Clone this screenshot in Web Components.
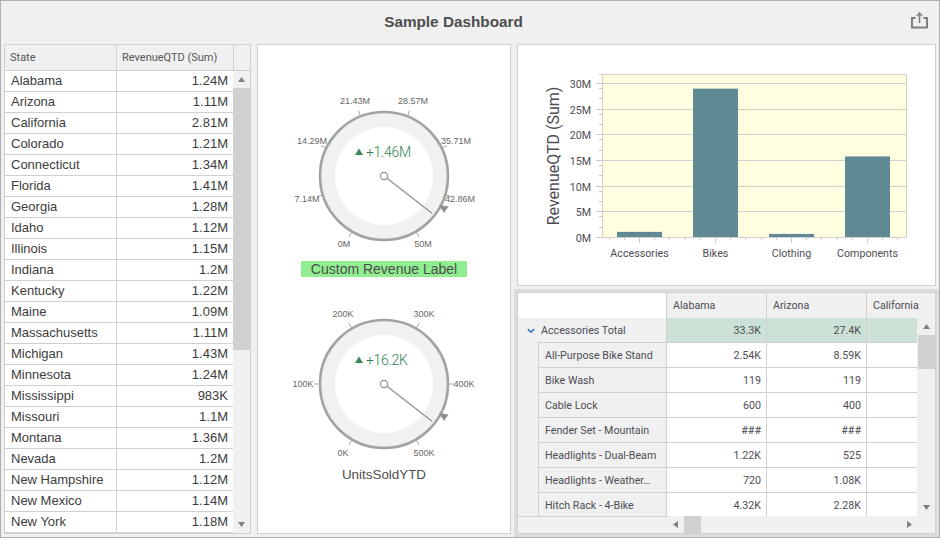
<!DOCTYPE html>
<html>
<head>
<meta charset="utf-8">
<title>Sample Dashboard</title>
<style>
  html, body { margin: 0; height: 100%; }
  body { font-family: "Liberation Sans", Arial, sans-serif; }
</style>
</head>
<body>
<sample-dashboard></sample-dashboard>

<script>
class DashHeader extends HTMLElement {
  constructor() {
    super();
    this.attachShadow({ mode: "open" });
    this.shadowRoot.innerHTML = `
      <style>
        :host {
          display: flex;
          align-items: center;
          height: 41px;
          padding: 0 11px 2px 0;
          flex: none;
        }
        h1 {
          flex: 1;
          margin: 0;
          padding-right: 5px;
          text-align: center;
          font: bold 15.3px "Liberation Sans", Arial, sans-serif;
          color: #4d4d4d;
        }
        svg { flex: none; display: block; margin-bottom: 2px; }
      </style>
      <h1><slot></slot></h1>
      <svg width="17" height="17" viewBox="0 0 17 17" fill="none" stroke="#7f7f7f" stroke-width="2">
        <path d="M4.5 6H1V15.5H16V6H12.5"/>
        <path d="M8.5 11V2" stroke-width="1.6"/>
        <path d="M5.8 4L8.5 1L11.2 4" stroke-width="1.4"/>
      </svg>
    `;
  }
}
customElements.define("dash-header", DashHeader);

class StateGrid extends HTMLElement {
  constructor() {
    super();
    this.attachShadow({ mode: "open" });
    const rows = [
      ["Alabama","1.24M"],["Arizona","1.11M"],["California","2.81M"],["Colorado","1.21M"],
      ["Connecticut","1.34M"],["Florida","1.41M"],["Georgia","1.28M"],["Idaho","1.12M"],
      ["Illinois","1.15M"],["Indiana","1.2M"],["Kentucky","1.22M"],["Maine","1.09M"],
      ["Massachusetts","1.11M"],["Michigan","1.43M"],["Minnesota","1.24M"],["Mississippi","983K"],
      ["Missouri","1.1M"],["Montana","1.36M"],["Nevada","1.2M"],["New Hampshire","1.12M"],
      ["New Mexico","1.14M"],["New York","1.18M"]
    ];
    this.shadowRoot.innerHTML = `
      <style>
        :host {
          display: flex;
          flex-direction: column;
          box-sizing: border-box;
          border: 1px solid #d0d0d0;
          background: #fff;
          overflow: hidden;
          font-family: "Liberation Sans", Arial, sans-serif;
        }
        .head {
          display: grid;
          grid-template-columns: 112px 117px 1fr;
          height: 25px;
          flex: none;
          background: #f0f0f0;
          border-bottom: 1px solid #d0d0d0;
          font: 11px Roboto, sans-serif;
          color: #555;
        }
        .head div {
          display: flex;
          align-items: center;
          padding: 0 0 1px 5px;
          border-right: 1px solid #d0d0d0;
        }
        .head div:last-child { border-right: 0; }
        .body { display: flex; flex: 1; min-height: 0; }
        .rows { width: 228px; flex: none; overflow: hidden; }
        .row {
          display: grid;
          grid-template-columns: 112px 116px;
          height: 21px;
          box-sizing: border-box;
          border-bottom: 1px solid #d0d0d0;
          font-size: 13px;
          line-height: 20px;
          color: #3c3c3c;
        }
        .row span { padding: 0 5px 0 6px; }
        .row span:first-child { border-right: 1px solid #d0d0d0; }
        .row span:last-child { text-align: right; }
        .scroll {
          flex: 1;
          display: flex;
          flex-direction: column;
          background: #f0f0f0;
        }
        .up, .down { height: 17px; flex: none; display: flex; align-items: center; justify-content: center; }
        .thumb { height: 262px; background: #d0d0d0; flex: none; }
        .gap { flex: 1; }
      </style>
      <div class="head"><div>State</div><div>RevenueQTD (Sum)</div><div></div></div>
      <div class="body">
        <div class="rows">
          ${rows.map(r => `<div class="row"><span>${r[0]}</span><span>${r[1]}</span></div>`).join("")}
        </div>
        <div class="scroll">
          <div class="up"><svg width="7" height="5"><path d="M3.5 0L7 5H0Z" fill="#808080"/></svg></div>
          <div class="thumb"></div>
          <div class="gap"></div>
          <div class="down"><svg width="7" height="5"><path d="M0 0H7L3.5 5Z" fill="#808080"/></svg></div>
        </div>
      </div>
    `;
  }
}
customElements.define("state-grid", StateGrid);

class DeltaGauge extends HTMLElement {
  constructor() {
    super();
    this.attachShadow({ mode: "open" });
  }
  connectedCallback() {
    const ticks = JSON.parse(this.getAttribute("ticks"));
    const cx = 96, cy = 96, r = 64;
    const tickMarks = ticks.map(t => {
      const a = t.a * Math.PI / 180;
      const x1 = cx + Math.sin(a) * r, y1 = cy - Math.cos(a) * r;
      const x2 = cx + Math.sin(a) * (r + 6), y2 = cy - Math.cos(a) * (r + 6);
      return `<line x1="${x1}" y1="${y1}" x2="${x2}" y2="${y2}" stroke="#a6a6a6"/>`;
    }).join("");
    const labels = ticks.map(t =>
      `<text x="${t.x}" y="${t.y}" text-anchor="middle">${t.t}</text>`).join("");
    this.shadowRoot.innerHTML = `
      <style>
        :host { display: block; width: 192px; flex: none; }
        svg { display: block; overflow: visible; }
        text { font: 9px "Liberation Sans", Arial, sans-serif; fill: #666; }
        .delta { font: 300 14px Roboto, sans-serif; letter-spacing: -0.3px; fill: #2f8455; }
      </style>
      <svg width="192" height="179" viewBox="0 0 192 179">
        ${tickMarks}
        <circle cx="${cx}" cy="${cy}" r="64" fill="#f1f1f1" stroke="#a3a3a3" stroke-width="2.6"/>
        <circle cx="${cx}" cy="${cy}" r="49" fill="#fff"/>
        <path d="M${cx - 29} ${cy - 21}l4 -6.5l4 6.5Z" fill="#3a8a5c"/>
        <text class="delta" x="${cx - 18}" y="${cy - 19}">${this.getAttribute("delta")}</text>
        <line x1="${cx + 3}" y1="${cy + 2.3}" x2="${cx + 48}" y2="${cy + 37.3}" stroke="#8f8f8f" stroke-width="1.2"/>
        <circle cx="${cx}" cy="${cy}" r="3.6" fill="#fff" stroke="#8f8f8f" stroke-width="1.2"/>
        <path d="M${cx + 55} ${cy + 29}L${cx + 64.5} ${cy + 30.5}L${cx + 60} ${cy + 37}Z" fill="#8f8f8f"/>
        ${labels}
      </svg>
    `;
  }
}
customElements.define("delta-gauge", DeltaGauge);

class GaugePanel extends HTMLElement {
  constructor() {
    super();
    this.attachShadow({ mode: "open" });
    this.shadowRoot.innerHTML = `
      <style>
        :host {
          display: flex;
          flex-direction: column;
          align-items: center;
          box-sizing: border-box;
          border: 1px solid #d0d0d0;
          background: #fff;
          padding-top: 35px;
        }
        .cap {
          font: 14px "Liberation Sans", Arial, sans-serif;
          color: #4d4d4d;
          text-align: center;
          line-height: 16px;
        }
        .custom {
          width: 166px;
          background: #90ee90;
          margin: 2px 0 11px;
        }
        .plain { font-size: 13.4px; }
      </style>
      <slot name="first"></slot>
      <div class="cap custom">Custom Revenue Label</div>
      <slot name="second"></slot>
      <div class="cap plain">UnitsSoldYTD</div>
    `;
  }
}
customElements.define("gauge-panel", GaugePanel);

class RevenueChart extends HTMLElement {
  constructor() {
    super();
    this.attachShadow({ mode: "open" });
    const plotW = 304, plotH = 163;
    const val = v => plotH - v * (154 / 30);
    const bars = [["Accessories", 1.0], ["Bikes", 28.9], ["Clothing", 0.6], ["Components", 15.7]];
    let gridLines = "", yLabels = "", axisTicks = "";
    for (let i = 0; i <= 6; i++) {
      const y = Math.round(val(i * 5)) + 0.5;
      if (i > 0) gridLines += `<line x1="0" x2="${plotW}" y1="${y}" y2="${y}" stroke="#cfcfcf"/>`;
      yLabels += `<text x="-11" y="${y + 4}" text-anchor="end">${i * 5}M</text>`;
      axisTicks += `<line x1="-6" x2="0" y1="${y}" y2="${y}" stroke="#c8c8c8"/>`;
      for (let j = 1; j <= 4 && i < 6; j++) {
        const m = Math.round(val(i * 5 + j)) + 0.5;
        if (j % 2 == 0) axisTicks += `<line x1="-3" x2="0" y1="${m}" y2="${m}" stroke="#c8c8c8"/>`;
      }
    }
    const top = Math.round(val(31.67)) + 0.5;
    axisTicks += `<line x1="-3" x2="0" y1="${top}" y2="${top}" stroke="#c8c8c8"/>`;
    bars.forEach((b, i) => {
      const c = 37.5 + i * 76;
      axisTicks += `<line x1="${c}" x2="${c}" y1="${plotH}" y2="${plotH + 6}" stroke="#c8c8c8"/>`;
      [-30, -15, 15, 30].forEach(d => {
        axisTicks += `<line x1="${c + d}" x2="${c + d}" y1="${plotH}" y2="${plotH + 3}" stroke="#c8c8c8"/>`;
      });
    });
    const barRects = bars.map((b, i) => {
      const y = val(b[1]);
      return `<rect x="${15 + i * 76}" y="${y}" width="45" height="${plotH - y}" fill="#5f8a93"/>`;
    }).join("");
    const xLabels = bars.map((b, i) =>
      `<text x="${37.5 + i * 76}" y="${plotH + 20}" text-anchor="middle">${b[0]}</text>`).join("");
    this.shadowRoot.innerHTML = `
      <style>
        :host {
          display: block;
          box-sizing: border-box;
          border: 1px solid #d0d0d0;
          background: #fff;
        }
        svg { display: block; }
        text { font: 10.7px Roboto, sans-serif; fill: #4d4d55; }
        .title { font-size: 16px; }
      </style>
      <svg width="417" height="240" viewBox="0 0 417 240">
        <g transform="translate(84 29)">
          <rect x=".5" y=".5" width="${plotW}" height="${plotH}" fill="#ffffe0" stroke="#cfcfcf"/>
          ${gridLines}${barRects}${axisTicks}${yLabels}${xLabels}
        </g>
        <text class="title" transform="translate(41 111) rotate(-90)" text-anchor="middle">RevenueQTD (Sum)</text>
      </svg>
    `;
  }
}
customElements.define("revenue-chart", RevenueChart);

class PivotGrid extends HTMLElement {
  constructor() {
    super();
    this.attachShadow({ mode: "open" });
    const rows = [
      ["All-Purpose Bike Stand","2.54K","8.59K"],["Bike Wash","119","119"],["Cable Lock","600","400"],
      ["Fender Set - Mountain","###","###"],["Headlights - Dual-Beam","1.22K","525"],
      ["Headlights - Weather\u2026","720","1.08K"],["Hitch Rack - 4-Bike","4.32K","2.28K"]
    ];
    this.shadowRoot.innerHTML = `
      <style>
        :host {
          display: grid;
          grid-template-columns: 1fr 17px;
          grid-template-rows: 25px 1fr 17px;
          box-sizing: border-box;
          border: 1px solid #d0d0d0;
          box-shadow: 0 0 0 3px #dcdcdc;
          background: #fff;
          overflow: hidden;
          font: 10.7px Roboto, sans-serif;
          color: #4d4d55;
        }
        .head, .line { display: grid; grid-template-columns: 149px 100px 100px 50px; }
        .head { grid-column: 1 / 3; grid-template-columns: 149px 100px 100px 1fr; border-bottom: 1px solid #d0d0d0; }
        .head div { border-right: 1px solid #d0d0d0; padding-left: 6px; line-height: 25px; background: #f0f0f0; }
        .head div:first-child { background: #fff; }
        .head div:last-child { border-right: 0; }
        .rows { overflow: hidden; }
        .line { height: 25px; grid-template-rows: 25px; background: #f0f0f0; line-height: 26px; }
        .line > div {
          box-sizing: border-box;
          background: #fff;
          border-right: 1px solid #d0d0d0;
          border-bottom: 1px solid #d0d0d0;
          text-align: right;
          padding-right: 5px;
        }
        .line > .name {
          background: #f0f0f0;
          text-align: left;
          padding: 0 0 0 6px;
          margin-left: 20px;
          border-left: 1px solid #d0d0d0;
          white-space: nowrap;
        }
        .line.total > div { background: #cde2d6; }
        .line.total > .name {
          background: linear-gradient(#d0d0d0, #d0d0d0) 20px 100% / 100% 1px no-repeat #f0f0f0;
          margin-left: 0;
          border-left: 0;
          border-bottom: 0;
          padding-left: 0;
          display: flex;
          align-items: center;
        }
        .line > div:nth-child(4) { border-right: 0; }
        .chev { margin: 1px 6px 0 9px; }
        .vs { background: #f0f0f0; display: flex; flex-direction: column; }
        .vs .a { height: 17px; flex: none; display: flex; align-items: center; justify-content: center; }
        .vs .t { height: 34px; background: #d0d0d0; flex: none; }
        .vs .g { flex: 1; }
        .foot { grid-column: 1 / 3; display: flex; background: #f0f0f0; }
        .corner { width: 149px; flex: none; box-sizing: border-box; border-top: 1px solid #d0d0d0; }
        .hs { flex: 1; display: flex; align-items: center; }
        .hs .a { width: 17px; flex: none; display: flex; justify-content: center; }
        .hs .t { width: 17px; height: 17px; background: #d0d0d0; flex: none; }
        .hs .g { flex: 1; }
      </style>
      <div class="head"><div></div><div>Alabama</div><div>Arizona</div><div>California</div></div>
      <div class="rows">
        <div class="line total">
          <div class="name"><svg class="chev" width="8" height="6" viewBox="0 0 8 6"><path d="M.8 1L4 4.2L7.2 1" fill="none" stroke="#2f6fc4" stroke-width="1.6"/></svg>Accessories Total</div>
          <div>33.3K</div><div>27.4K</div><div></div>
        </div>
        ${rows.map(r => `<div class="line"><div class="name">${r[0]}</div><div>${r[1]}</div><div>${r[2]}</div><div></div></div>`).join("")}
      </div>
      <div class="vs">
        <div class="a"><svg width="7" height="5"><path d="M3.5 0L7 5H0Z" fill="#808080"/></svg></div>
        <div class="t"></div>
        <div class="g"></div>
        <div class="a"><svg width="7" height="5"><path d="M0 0H7L3.5 5Z" fill="#808080"/></svg></div>
      </div>
      <div class="foot">
        <div class="corner"></div>
        <div class="hs">
          <div class="a"><svg width="5" height="7"><path d="M5 0V7L0 3.5Z" fill="#808080"/></svg></div>
          <div class="t"></div>
          <div class="g"></div>
          <div class="a" style="margin-right:17px"><svg width="5" height="7"><path d="M0 0V7L5 3.5Z" fill="#808080"/></svg></div>
        </div>
      </div>
    `;
  }
}
customElements.define("pivot-grid", PivotGrid);

class SampleDashboard extends HTMLElement {
  constructor() {
    super();
    this.attachShadow({ mode: "open" });
    this.shadowRoot.innerHTML = `
      <style>
        :host {
          display: flex;
          flex-direction: column;
          box-sizing: border-box;
          width: 940px;
          height: 538px;
          background: #f0f0f0;
          border: 1px solid #b0b0b0;
          padding-bottom: 3px;
        }
        .main {
          flex: 1;
          display: grid;
          grid-template-columns: 247px 254px 1fr;
          gap: 6px;
          padding: 0 3px;
          min-height: 0;
        }
        .right {
          display: flex;
          flex-direction: column;
          min-height: 0;
        }
        revenue-chart { height: 242px; flex: none; margin-bottom: 6px; }
        pivot-grid { flex: 1; min-height: 0; }
      </style>
      <dash-header>Sample Dashboard</dash-header>
      <div class="main">
        <state-grid></state-grid>
        <gauge-panel>
          <delta-gauge slot="first" delta="+1.46M" ticks='[
            {"a":-150,"t":"0M","x":56,"y":167},{"a":-107.1,"t":"7.14M","x":19,"y":122},
            {"a":-64.3,"t":"14.29M","x":24,"y":64},{"a":-21.4,"t":"21.43M","x":67,"y":24},
            {"a":21.4,"t":"28.57M","x":125,"y":24},{"a":64.3,"t":"35.71M","x":168,"y":64},
            {"a":107.1,"t":"42.86M","x":172,"y":122},{"a":150,"t":"50M","x":135,"y":167}]'></delta-gauge>
          <delta-gauge slot="second" delta="+16.2K" ticks='[
            {"a":-150,"t":"0K","x":55,"y":168},{"a":-90,"t":"100K","x":15,"y":99},
            {"a":-30,"t":"200K","x":55,"y":29},{"a":30,"t":"300K","x":136,"y":29},
            {"a":90,"t":"400K","x":176,"y":99},{"a":150,"t":"500K","x":136,"y":168}]'></delta-gauge>
        </gauge-panel>
        <div class="right">
          <revenue-chart></revenue-chart>
          <pivot-grid></pivot-grid>
        </div>
      </div>
    `;
  }
}
customElements.define("sample-dashboard", SampleDashboard);
</script>
</body>
</html>
